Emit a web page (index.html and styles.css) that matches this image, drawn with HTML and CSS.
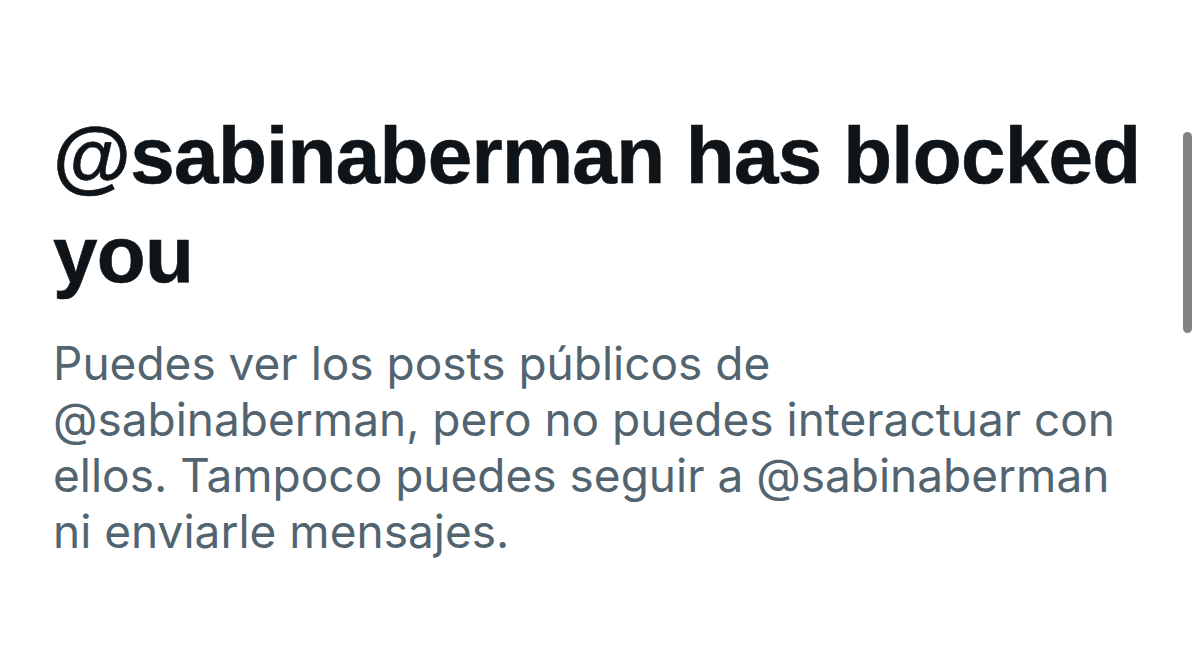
FILE: index.html
```html
<!DOCTYPE html>
<html lang="es">
<head>
<meta charset="utf-8">
<title>Bloqueado</title>
<link rel="stylesheet" href="styles.css">
</head>
<body>
<main class="screen">
  <section class="blocked">
    <h1 class="blocked-title">@sabinaberman has blocked you</h1>
    <p class="blocked-text">Puedes ver los posts públicos de @sabinaberman, pero no puedes interactuar con ellos. Tampoco puedes seguir a @sabinaberman ni enviarle mensajes.</p>
  </section>
  <div class="scroll-thumb"></div>
</main>
</body>
</html>
```
FILE: styles.css
```css
html, body {
  margin: 0;
  padding: 0;
  background: #ffffff;
}

.screen {
  position: relative;
  width: 1200px;
  height: 656px;
  overflow: hidden;
  box-sizing: border-box;
  padding: 106px 40px 0 53px;
}

.blocked {
  display: flex;
  flex-direction: column;
  gap: 31px;
}

.blocked-title {
  margin: 0;
  font-family: "Liberation Sans", Arial, sans-serif;
  font-weight: 700;
  font-size: 80px;
  line-height: 99px;
  letter-spacing: -0.7px;
  color: #0f1419;
  -webkit-text-stroke: 0.6px #0f1419;
}

.blocked-text {
  margin: 0;
  font-family: "Inter", "Liberation Sans", sans-serif;
  font-weight: 400;
  font-size: 46px;
  line-height: 56px;
  color: #536471;
  max-width: 1085px;
}

/* overlay scrollbar thumb */
.scroll-thumb {
  position: absolute;
  left: 1183px;
  top: 132px;
  width: 9px;
  height: 201px;
  border-radius: 5px;
  background: #828282;
}
```
